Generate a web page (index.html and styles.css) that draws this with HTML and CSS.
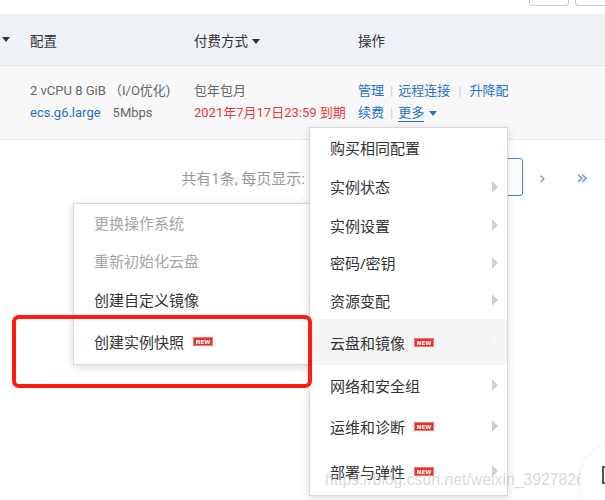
FILE: index.html
```html
<!DOCTYPE html>
<html lang="zh">
<head>
<meta charset="utf-8">
<link rel="stylesheet" href="styles.css">
</head>
<body>
<div class="page">
  <div class="topbar">
    <span class="tbtn"></span>
    <span class="tbtn tbtn-2"></span>
  </div>
  <div class="thead">
    <div class="cell cell-pre"><span class="caret"></span></div>
    <div class="cell">配置</div>
    <div class="cell">付费方式 <span class="caret caret-inline"></span></div>
    <div class="cell">操作</div>
  </div>
  <div class="trow">
    <div class="cell cell-pre"></div>
    <div class="cell">
      <div class="line muted">2 vCPU 8 GiB （I/O优化)</div>
      <div class="line"><span class="link">ecs.g6.large</span><span class="muted gap">5Mbps</span></div>
    </div>
    <div class="cell">
      <div class="line muted">包年包月</div>
      <div class="line danger">2021年7月17日23:59 到期</div>
    </div>
    <div class="cell">
      <div class="line"><span class="link">管理</span><span class="sep">|</span><span class="link">远程连接</span><span class="sep sep-wide">|</span><span class="link">升降配</span></div>
      <div class="line"><span class="link">续费</span><span class="sep">|</span><span class="link more">更多</span><span class="caret caret-blue"></span></div>
    </div>
  </div>
  <div class="pager">
    <span class="pager-text">共有1条, 每页显示:</span>
    <span class="pager-select"></span>
    <span class="pager-btn">›</span>
    <span class="pager-btn pager-btn-last">»</span>
  </div>
</div>

<div class="submenu">
  <div class="item item-a disabled">更换操作系统</div>
  <div class="item item-b disabled">重新初始化云盘</div>
  <div class="item item-c">创建自定义镜像</div>
  <div class="item item-d">创建实例快照<span class="badge">NEW</span></div>
</div>

<div class="menu">
  <div class="item m1">购买相同配置</div>
  <div class="item m2">实例状态<span class="arrow"></span></div>
  <div class="item m3">实例设置<span class="arrow"></span></div>
  <div class="item m4">密码/密钥<span class="arrow"></span></div>
  <div class="item m5">资源变配<span class="arrow"></span></div>
  <div class="item m6 active">云盘和镜像<span class="badge">NEW</span><span class="arrow arrow-light"></span></div>
  <div class="item m7">网络和安全组<span class="arrow"></span></div>
  <div class="item m8">运维和诊断<span class="badge">NEW</span><span class="arrow"></span></div>
  <div class="item m9">部署与弹性<span class="badge">NEW</span><span class="arrow"></span></div>
</div>

<div class="annot"></div>
<div class="watermark">https://blog.csdn.net/weixin_39278265</div>
<div class="float-clip"><div class="float-btn"><span class="float-icon"></span></div></div>
</body>
</html>
```

FILE: styles.css
```css
html, body {
  margin: 0;
  padding: 0;
  background: #fff;
}
body {
  width: 605px;
  height: 500px;
  overflow: hidden;
  position: relative;
  font-family: "Noto Sans", "Noto Sans CJK SC", sans-serif;
  color: #333;
}
.page {
  display: flex;
  flex-direction: column;
}
.topbar {
  height: 14px;
  display: flex;
  justify-content: flex-end;
  align-items: flex-end;
  gap: 6px;
  overflow: hidden;
}
.tbtn {
  width: 40px;
  height: 30px;
  margin-bottom: 8px;
  border: 1px solid #c9c9c9;
  border-radius: 3px;
  box-sizing: border-box;
  flex: none;
}
.tbtn-2 {
  width: 30px;
  border-right: none;
  border-radius: 3px 0 0 3px;
}
.thead, .trow {
  display: grid;
  grid-template-columns: 30px 164px 164px 1fr;
  font-family: "Roboto", "Noto Sans CJK SC", sans-serif;
  font-size: 13px;
}
.thead {
  height: 51px;
  background: #eef1f6;
  align-items: center;
  border-bottom: 1px solid #e4e7ec;
  color: #333;
  font-size: 13.5px;
}
.cell-pre {
  display: flex;
  align-items: center;
}
.caret {
  display: inline-block;
  width: 0;
  height: 0;
  border-left: 4px solid transparent;
  border-right: 4px solid transparent;
  border-top: 5px solid #333;
  margin-left: 2px;
}
.caret-inline {
  margin-left: 1px;
  vertical-align: middle;
}
.caret-blue {
  border-top-color: #2f6fb5;
  margin-left: 5px;
  vertical-align: middle;
}
.trow {
  height: 74px;
  box-sizing: border-box;
  background: #f8f8f9;
  border-bottom: 1px solid #e8e8e8;
  padding-top: 14px;
}
.line {
  height: 22px;
  line-height: 22px;
  white-space: nowrap;
}
.muted { color: #666; }
.gap { margin-left: 12px; }
.link { color: #1f72c6; }
.danger { color: #e8373c; }
.sep {
  color: #d0d0d0;
  margin: 0 5px 0 6px;
}
.sep-wide { margin: 0 8px 0 8px; }
.more {
  border-bottom: 1px solid #1f72c6;
  line-height: 16px;
  display: inline-block;
}
.pager {
  height: 72px;
  display: flex;
  align-items: center;
  justify-content: flex-end;
  padding-right: 2px;
  padding-top: 2px;
  box-sizing: border-box;
}
.pager-text {
  font-family: "Roboto", "Noto Sans CJK SC", sans-serif;
  font-size: 15px;
  color: #999;
  margin-right: 12px;
}
.pager-select {
  width: 206px;
  height: 38px;
  border: 1px solid #3a86d6;
  border-radius: 3px;
  box-sizing: border-box;
}
.pager-btn {
  width: 38px;
  text-align: center;
  font-size: 18px;
  color: #7f97b8;
  font-family: "DejaVu Sans", sans-serif;
}
.pager-btn-last {
  width: 42px;
  font-size: 20px;
}

/* menus */
.menu, .submenu {
  position: absolute;
  background: #fff;
  border: 1px solid #d9d9d9;
  box-shadow: 0 2px 8px rgba(0, 0, 0, 0.15);
  box-sizing: border-box;
  font-size: 15px;
  color: #333;
}
.menu {
  left: 309px;
  top: 127px;
  width: 199px;
  height: 369px;
}
.submenu {
  left: 73px;
  top: 203px;
  width: 240px;
  height: 162px;
}
.item {
  display: flex;
  align-items: center;
  padding-left: 20px;
  position: relative;
  white-space: nowrap;
}
.item.disabled { color: #a6a6a6; }
.item.active { background: #f5f5f5; }
.item-a { height: 37px; }
.item-b { height: 39px; }
.item-c { height: 38px; }
.item-d { height: 46px; }
.m1 { height: 39px; }
.m2 { height: 39px; }
.m3 { height: 38px; }
.m4 { height: 37px; }
.m5 { height: 38px; }
.m6 { height: 46px; }
.m7 { height: 40px; }
.m8 { height: 42px; }
.m9 { height: 48px; }
.badge {
  display: inline-block;
  margin-left: 9px;
  width: 20px;
  height: 9px;
  line-height: 9px;
  background: #e0342c;
  border: 1px solid #f07a70;
  box-sizing: border-box;
  color: #fff;
  font-family: "DejaVu Sans", sans-serif;
  font-weight: bold;
  font-size: 5.5px;
  text-align: center;
}
.arrow {
  position: absolute;
  right: 9px;
  top: 50%;
  margin-top: -6px;
  width: 0;
  height: 0;
  border-top: 6px solid transparent;
  border-bottom: 6px solid transparent;
  border-left: 6px solid #cfcfcf;
}
.arrow-light { border-left-color: #fafafa; }

.annot {
  position: absolute;
  left: 12px;
  top: 315px;
  width: 300px;
  height: 73px;
  border: 4px solid #ff1a12;
  border-radius: 7px;
  box-sizing: border-box;
}
.watermark {
  position: absolute;
  left: 325px;
  top: 471px;
  font-family: "Liberation Sans", sans-serif;
  font-size: 15.8px;
  color: rgba(185, 185, 185, 0.55);
  white-space: nowrap;
}
.float-clip {
  position: absolute;
  left: 575px;
  top: 435px;
  width: 30px;
  height: 65px;
  overflow: hidden;
}
.float-btn {
  position: absolute;
  left: 5px;
  top: 5px;
  width: 84px;
  height: 84px;
  border-radius: 50%;
  background: #fff;
  box-shadow: 0 0 6px rgba(0, 0, 0, 0.08);
}
.float-icon {
  position: absolute;
  left: 22px;
  top: 26px;
  width: 10px;
  height: 18px;
  border: 2px solid #555;
  box-sizing: border-box;
}
```
